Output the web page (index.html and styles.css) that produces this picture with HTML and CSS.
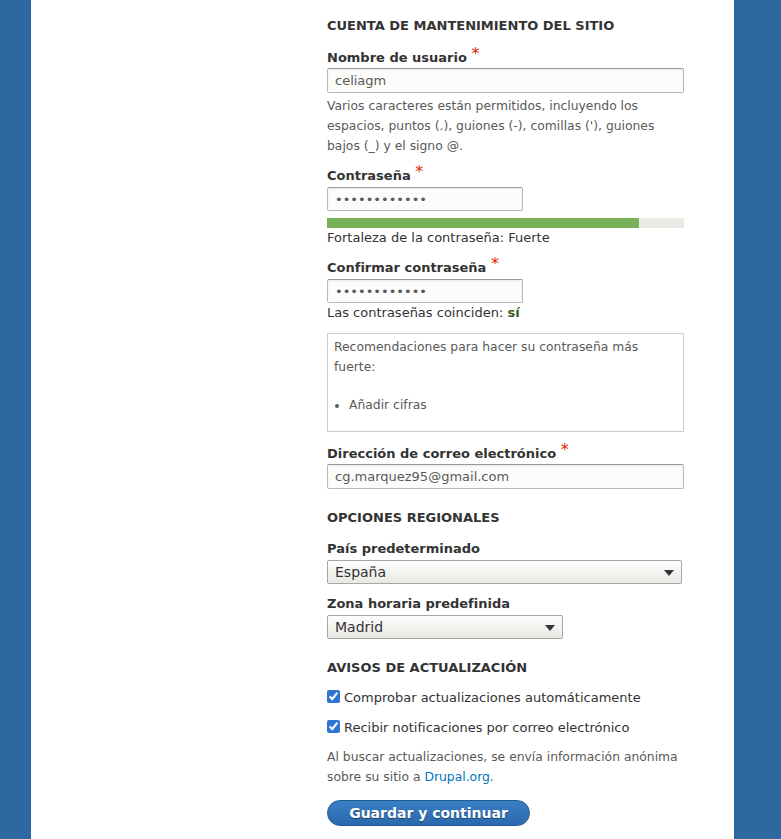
FILE: index.html
```html
<!DOCTYPE html>
<html lang="es">
<head>
<meta charset="utf-8">
<title>Instalación</title>
<link rel="stylesheet" href="styles.css">
</head>
<body>
<div class="page">
  <div class="sidebar"></div>
  <form class="content">
    <h2 class="section-title first">Cuenta de mantenimiento del sitio</h2>

    <div class="field f-9">
      <label class="label">Nombre de usuario <span class="req">*</span></label>
      <input class="text full" type="text" value="celiagm">
      <div class="description">Varios caracteres están permitidos, incluyendo los espacios, puntos (.), guiones (-), comillas ('), guiones bajos (_) y el signo @.</div>
    </div>

    <div class="field f-8">
      <label class="label">Contraseña <span class="req">*</span></label>
      <input class="text short" type="password" value="abcdefghijkl">
      <div class="strength"><div class="strength-fill" style="width: 87.4%"></div></div>
      <div class="status strength-text">Fortaleza de la contraseña: Fuerte</div>
    </div>

    <div class="field f-10">
      <label class="label">Confirmar contraseña <span class="req">*</span></label>
      <input class="text short" type="password" value="abcdefghijkl">
      <div class="status match">Las contraseñas coinciden: <span class="ok">sí</span></div>
    </div>

    <div class="suggestions">
      <div>Recomendaciones para hacer su contraseña más fuerte:</div>
      <ul>
        <li>Añadir cifras</li>
      </ul>
    </div>

    <div class="field f-10">
      <label class="label">Dirección de correo electrónico <span class="req">*</span></label>
      <input class="text full" type="email" value="cg.marquez95@gmail.com">
    </div>

    <h2 class="section-title regional">Opciones regionales</h2>

    <div class="field f-8">
      <label class="label">País predeterminado</label>
      <div class="select wide"><span>España</span><i class="arrow"></i></div>
    </div>

    <div class="field f-8">
      <label class="label">Zona horaria predefinida</label>
      <div class="select narrow"><span>Madrid</span><i class="arrow"></i></div>
    </div>

    <h2 class="section-title updates">Avisos de actualización</h2>

    <label class="check first-check"><input type="checkbox" checked> Comprobar actualizaciones automáticamente</label>
    <label class="check"><input type="checkbox" checked> Recibir notificaciones por correo electrónico</label>

    <div class="description note">Al buscar actualizaciones, se envía información anónima sobre su sitio a <a href="#">Drupal.org</a>.</div>

    <button class="button" type="button">Guardar y continuar</button>
  </form>
</div>
</body>
</html>
```

FILE: styles.css
```css
html, body {
  margin: 0;
  padding: 0;
}
body {
  background: #2d68a1;
  font-family: "DejaVu Sans", Verdana, sans-serif;
  font-size: 13px;
  line-height: 20px;
  color: #333;
  height: 839px;
  overflow: hidden;
}
.page {
  margin-left: 31px;
  width: 703px;
  min-height: 839px;
  background: #fff;
  display: flex;
}
.sidebar {
  width: 296px;
  flex: none;
}
.content {
  width: 357px;
  display: flex;
  flex-direction: column;
  align-items: flex-start;
}
.section-title {
  font-size: 13px;
  line-height: 22px;
  font-weight: bold;
  text-transform: uppercase;
  margin: 0;
  color: #333;
}
.section-title.first { margin-top: 15px; }
.section-title.regional { margin-top: 18px; }
.section-title.updates { margin-top: 18px; }
.field {
  display: flex;
  flex-direction: column;
  align-items: flex-start;
  width: 100%;
}
.f-8 { margin-top: 8px; }
.f-9 { margin-top: 9px; }
.f-10 { margin-top: 10px; }
.label {
  display: block;
  height: 20px;
  padding-top: 2px;
  font-weight: bold;
  font-size: 13px;
  line-height: 20px;
  color: #333;
  margin-bottom: 0;
}
.req {
  color: #e62600;
  font-weight: normal;
  font-size: 16px;
  line-height: 0;
  vertical-align: 3px;
}
.text {
  box-sizing: border-box;
  height: 25px;
  border: 1px solid #b8b8b8;
  border-top-color: #999;
  border-radius: 2px;
  background: #fcfcfa;
  font-family: "DejaVu Sans", Verdana, sans-serif;
  font-size: 13px;
  color: #595959;
  padding: 0 7px;
  margin: 0;
  box-shadow: inset 0 1px 2px rgba(0,0,0,0.08);
}
.text.full { width: 357px; }
.text.short { width: 196px; height: 24px; margin-top: 1px; }
.description {
  font-size: 12.35px;
  line-height: 20px;
  color: #595959;
  margin-top: 3px;
}
.strength {
  width: 357px;
  height: 10px;
  background: #ebeae4;
  margin-top: 7px;
}
.strength-fill {
  height: 100%;
  background: #77b259;
}
.status {
  font-size: 13px;
  line-height: 18px;
  color: #333;
}
.status.strength-text {
  padding-top: 1px;
  height: 17px;
}
.status.match { margin-top: 1px; }
.ok {
  color: #325e1c;
  font-weight: bold;
}
.suggestions {
  box-sizing: border-box;
  width: 357px;
  height: 99px;
  border: 1px solid #ccc;
  margin-top: 11px;
  padding: 3px 6px;
  font-size: 12.35px;
  line-height: 20px;
  color: #595959;
}
.suggestions ul {
  margin: 18px 0 0;
  padding: 0 0 0 15px;
}
.select {
  box-sizing: border-box;
  height: 24px;
  margin-top: 1px;
  border: 1px solid #a6a6a6;
  border-radius: 2px;
  background: linear-gradient(#fefefe, #e8e8e3);
  position: relative;
  font-size: 14px;
  line-height: 22px;
  color: #333;
  padding-left: 7px;
}
.select.wide { width: 355px; }
.select.narrow { width: 236px; }
.arrow {
  position: absolute;
  right: 7px;
  top: 9px;
  width: 0;
  height: 0;
  border-left: 5px solid transparent;
  border-right: 5px solid transparent;
  border-top: 6px solid #333;
}
.check {
  display: flex;
  align-items: center;
  font-size: 13px;
  line-height: 20px;
  color: #333;
  margin-top: 10px;
}
.check.first-check { margin-top: 9px; }
.check input {
  width: 13px;
  height: 13px;
  margin: 0 4px 0 0;
  accent-color: #2f74d0;
  position: relative;
  top: -2px;
}
.note {
  margin-top: 9px;
  line-height: 20px;
}
.note a {
  color: #0074bd;
  text-decoration: none;
}
.button {
  margin-top: 13px;
  box-sizing: border-box;
  height: 26px;
  width: 203px;
  border: 1px solid #1e5c90;
  border-radius: 20px;
  background: linear-gradient(#3a7fc4, #2a69ad);
  color: #fff;
  font-family: "DejaVu Sans", Verdana, sans-serif;
  font-weight: bold;
  font-size: 14px;
  line-height: 22px;
  padding: 0;
  text-shadow: 0 1px 1px rgba(0,0,0,0.4);
}
```
